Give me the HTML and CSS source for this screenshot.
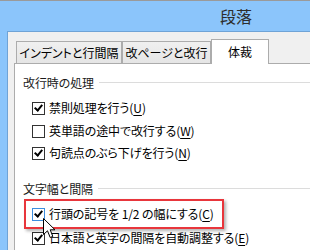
FILE: index.html
```html
<!DOCTYPE html>
<html lang="ja">
<head>
<meta charset="utf-8">
<link rel="stylesheet" href="styles.css">
</head>
<body>
<div class="window">
  <div class="titlebar"><span class="title">段落</span></div>
  <div class="client">
    <div class="tabs">
      <div class="tab tab-1">インデントと行間隔</div>
      <div class="tab tab-2">改ページと改行</div>
      <div class="tab tab-3 active">体裁</div>
    </div>
    <div class="panel">
      <div class="group group-1">
        <div class="group-head"><span>改行時の処理</span></div>
        <div class="row row-1"><span class="cb checked"></span><span class="lbl">禁則処理を行う(<u>U</u>)</span></div>
        <div class="row row-2"><span class="cb"></span><span class="lbl">英単語の途中で改行する(<u>W</u>)</span></div>
        <div class="row row-3"><span class="cb checked"></span><span class="lbl">句読点のぶら下げを行う(<u>N</u>)</span></div>
      </div>
      <div class="group group-2">
        <div class="group-head"><span>文字幅と間隔</span></div>
        <div class="row row-4"><span class="cb checked focus"></span><span class="lbl">行頭の記号を 1/2 の幅にする(<u>C</u>)</span></div>
        <div class="row row-5"><span class="cb checked"></span><span class="lbl">日本語と英字の間隔を自動調整する(<u>E</u>)</span></div>
      </div>
      <div class="highlight"></div>
      <svg class="cursor" width="13" height="21" viewBox="0 0 13 21">
        <path d="M0.5 0.5 L0.5 16.5 L4.5 12.8 L7.2 19.5 L9.8 18.4 L7.2 11.8 L12 11.8 Z" fill="#fff" stroke="#000" stroke-width="1" stroke-linejoin="miter"/>
      </svg>
    </div>
  </div>
</div>
</body>
</html>
```

FILE: styles.css
```css
html, body {
  margin: 0;
  padding: 0;
  width: 310px;
  height: 250px;
  overflow: hidden;
  background: #9f9f9f;
}

.window {
  display: flex;
  flex-direction: column;
  box-sizing: border-box;
  height: 250px;
  border-top: 1px solid #9a9a9a;
  background: #8bc5fb;
  font-family: "Noto Sans CJK JP", "Noto Sans", sans-serif;
  font-feature-settings: "palt";
  color: #000;
}

.titlebar {
  flex: none;
  height: 30px;
  line-height: 30px;
  padding-left: 220px;
}

.title {
  font-size: 16px;
  color: #2d2d2d;
}

.client {
  flex: 1;
  display: flex;
  flex-direction: column;
  min-height: 0;
  margin-left: 7px;
  border-left: 1px solid #6fa3d6;
  border-top: 1px solid #6fa3d6;
  background: #f0f0f0;
  padding: 7px 0 0 6px;
  overflow: hidden;
}

.tabs {
  flex: none;
  display: flex;
  align-items: flex-end;
  height: 24px;
  margin-left: 2px;
  position: relative;
  z-index: 1;
}

.tab {
  box-sizing: border-box;
  height: 22px;
  border: 1px solid #acacac;
  border-bottom: none;
  background: linear-gradient(#f0f0f0, #e5e5e5);
  font-size: 12px;
  line-height: 21px;
  text-align: center;
  white-space: nowrap;
}

.tab-1 { width: 106px; }
.tab-2 { width: 89px; }
.tab-3 { width: 58px; }

.tab.active {
  height: 25px;
  margin-bottom: -1px;
  background: #fff;
  line-height: 24px;
  padding-bottom: 1px;
}

.panel {
  flex: 1;
  min-height: 0;
  position: relative;
  background: #fff;
  border-top: 1px solid #acacac;
  border-left: 1px solid #acacac;
  font-size: 12px;
  letter-spacing: -0.1px;
}

.group-head {
  display: flex;
  align-items: center;
  height: 16px;
  line-height: 16px;
  padding-left: 8px;
  color: #1a1a1a;
}

.group-head::after {
  content: "";
  flex: 1;
  border-top: 1px solid #dcdcdc;
  margin-left: 5px;
  margin-top: -1px;
}

.group-1 { padding-top: 11px; }
.group-2 { padding-top: 20px; }

.row {
  display: flex;
  align-items: center;
  height: 16px;
  line-height: 16px;
  padding-left: 17px;
  white-space: nowrap;
}

.row-1 { margin-top: 9px; }
.row-2 { margin-top: 7px; }
.row-3 { margin-top: 6px; }
.row-4 { margin-top: 9px; }
.row-5 { margin-top: 8px; }

.cb {
  box-sizing: border-box;
  width: 13px;
  height: 13px;
  border: 1px solid #333;
  background: #fff;
  margin-right: 4px;
  flex: none;
  position: relative;
}

.cb.focus {
  border-color: #3c8ee0;
}

.cb.checked::after {
  content: "";
  position: absolute;
  left: 2px;
  top: 0px;
  width: 3px;
  height: 6px;
  border-right: 2px solid #000;
  border-bottom: 2px solid #000;
  transform: translate(1px, 0px) rotate(40deg);
}

.lbl u {
  text-decoration: underline;
  text-underline-offset: 2px;
}

.highlight {
  position: absolute;
  left: 9px;
  top: 135px;
  width: 200px;
  height: 30px;
  box-sizing: border-box;
  border: 2px solid #e8363c;
  box-shadow: 2px 2px 3px rgba(0, 0, 0, 0.3);
}

.cursor {
  position: absolute;
  left: 28px;
  top: 154px;
}
```
